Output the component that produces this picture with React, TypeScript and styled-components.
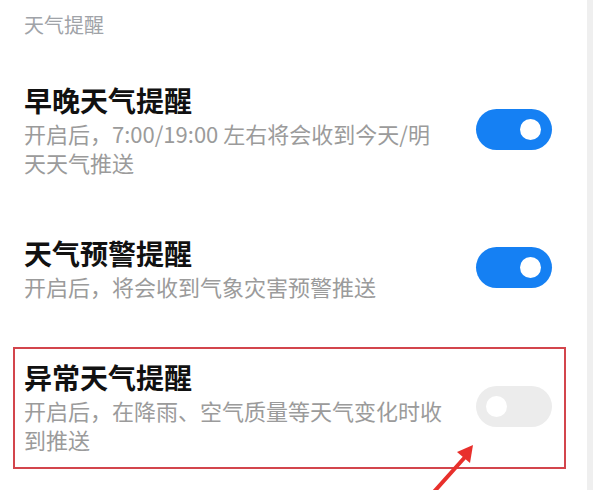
import React from "react";
import styled, { createGlobalStyle } from "styled-components";

const Global = createGlobalStyle`
  html, body { margin: 0; padding: 0; background: #ffffff; }
  body { width: 600px; height: 490px; overflow: hidden; }
  * { box-sizing: border-box; }
`;

const Page = styled.div`
  position: relative;
  display: flex;
  width: 600px;
  height: 490px;
  background: #ffffff;
  font-family: "Noto Sans CJK SC", "Noto Sans", sans-serif;
  overflow: hidden;
`;

const Main = styled.div`
  flex: 0 0 587px;
  display: flex;
  flex-direction: column;
`;

const ScrollStrip = styled.div`
  flex: 0 0 6px;
  background: #efefef;
`;

const SectionHeader = styled.div`
  padding: 11px 0 14px 24px;
  font-size: 20px;
  line-height: 28px;
  color: #a0a3a8;
`;

const Row = styled.div`
  position: relative;
  display: flex;
  align-items: center;
  justify-content: space-between;
  padding: 28px 35px 29px 24px;
`;

const TextCol = styled.div`
  display: flex;
  flex-direction: column;
  width: 440px;
`;

const Title = styled.div`
  font-size: 28px;
  line-height: 38px;
  font-weight: 700;
  color: #111111;
`;

const Sub = styled.div`
  font-size: 22px;
  line-height: 29px;
  color: #9b9b9b;
`;

const Switch = styled.div<{ $on: boolean }>`
  position: relative;
  flex: 0 0 76px;
  height: 41px;
  border-radius: 21px;
  background: ${(p) => (p.$on ? "#1580f3" : "#ececec")};
`;

const Knob = styled.span<{ $on: boolean }>`
  position: absolute;
  top: 10px;
  ${(p) => (p.$on ? "right: 11px;" : "left: 10px;")}
  width: 21px;
  height: 21px;
  border-radius: 50%;
  background: #ffffff;
`;

const Highlight = styled.div`
  position: absolute;
  left: 13px;
  top: 17px;
  width: 553px;
  height: 122px;
  border: 2px solid #d3454c;
  pointer-events: none;
`;

const ArrowOverlay = styled.svg`
  position: absolute;
  left: 420px;
  top: 436px;
  width: 70px;
  height: 60px;
  pointer-events: none;
`;

type Item = { title: string; lines: string[]; on: boolean; marked?: boolean };

const items: Item[] = [
  {
    title: "早晚天气提醒",
    lines: ["开启后，7:00/19:00 左右将会收到今天/明", "天天气推送"],
    on: true,
  },
  { title: "天气预警提醒", lines: ["开启后，将会收到气象灾害预警推送"], on: true },
  {
    title: "异常天气提醒",
    lines: ["开启后，在降雨、空气质量等天气变化时收", "到推送"],
    on: false,
    marked: true,
  },
];

export default function App() {
  return (
    <Page>
      <Global />
      <Main>
        <SectionHeader>天气提醒</SectionHeader>
        {items.map((it) => (
          <Row key={it.title}>
            <TextCol>
              <Title>{it.title}</Title>
              {it.lines.map((l) => (
                <Sub key={l}>{l}</Sub>
              ))}
            </TextCol>
            <Switch $on={it.on}>
              <Knob $on={it.on} />
            </Switch>
            {it.marked && <Highlight />}
          </Row>
        ))}
      </Main>
      <ScrollStrip />
      <ArrowOverlay viewBox="0 0 70 60">
        <line x1="12" y1="58" x2="46" y2="20" stroke="#e8302c" strokeWidth="4" strokeLinecap="round" />
        <polygon points="53,9 50,27 37,16" fill="#e8302c" />
      </ArrowOverlay>
    </Page>
  );
}
